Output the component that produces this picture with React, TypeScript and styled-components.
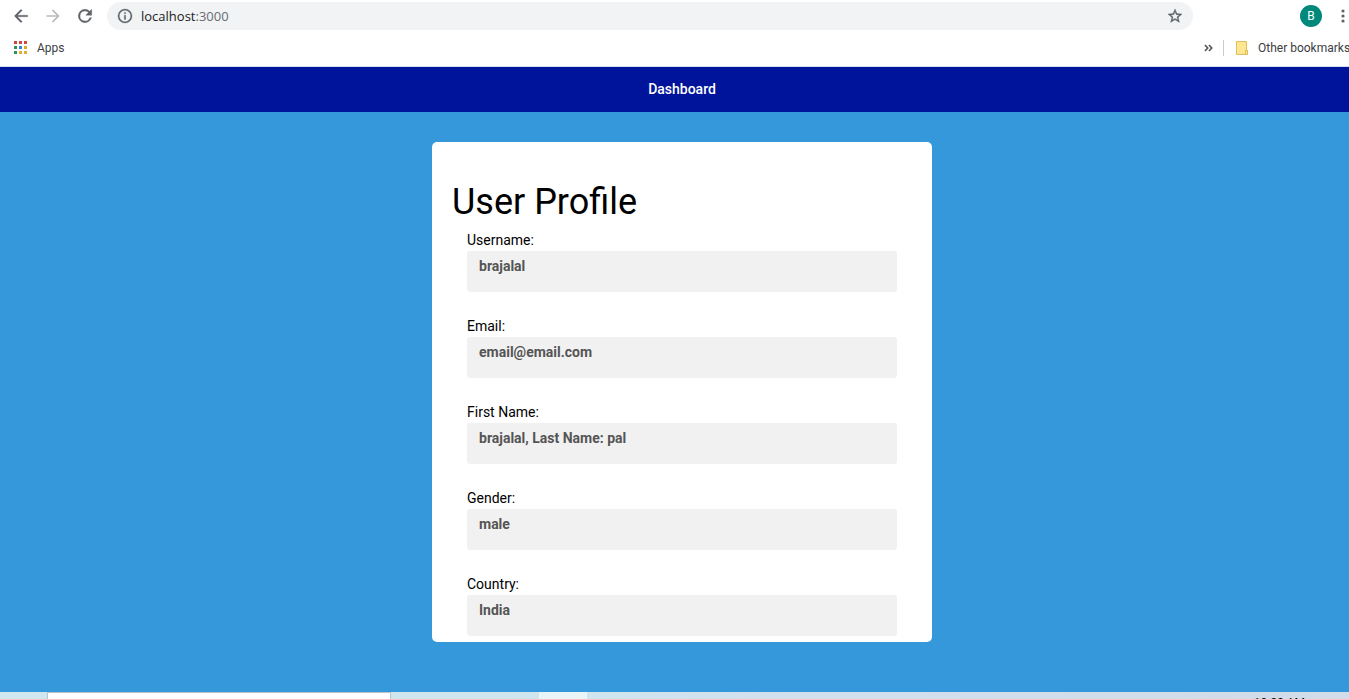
import React from "react";
import styled, { createGlobalStyle } from "styled-components";

const GlobalStyle = createGlobalStyle`
  * { box-sizing: border-box; }
  html, body { margin: 0; padding: 0; }
  body { overflow: hidden; font-family: Roboto, "Liberation Sans", sans-serif; font-size: 14px; }
`;

const uiFont = `"Open Sans", "Noto Sans", sans-serif`;

const Screen = styled.div`
  display: flex;
  flex-direction: column;
  height: 100vh;
  overflow: hidden;
`;

const BrowserChrome = styled.div`
  flex: none;
  background: #fff;
  border-bottom: 1px solid #d5dff0;
  font-family: ${uiFont};
`;

const Toolbar = styled.div`
  display: flex;
  align-items: center;
  height: 32px;
  padding-left: 9px;
`;

const IconButton = styled.button<{ $muted?: boolean }>`
  display: flex;
  flex: none;
  align-items: center;
  justify-content: center;
  width: 24px;
  height: 24px;
  padding: 0;
  border: 0;
  background: none;
  color: ${(p) => (p.$muted ? "#babcbe" : "#5f6368")};
`;

const NavButtons = styled.div`
  display: flex;
  gap: 8px;
  margin-right: 10px;
`;

const AddressBar = styled.div`
  display: flex;
  flex: 1;
  align-items: center;
  height: 28px;
  padding: 0 6px;
  border-radius: 14px;
  background: #f1f3f4;
`;

const Address = styled.a`
  flex: 1;
  margin-left: 4px;
  color: #202124;
  font-size: 13px;
  line-height: 20px;
  text-decoration: none;
`;

const Port = styled.span`
  color: #686c70;
`;

const Avatar = styled.button`
  flex: none;
  width: 22px;
  height: 22px;
  margin-left: 107px;
  margin-right: 9px;
  padding: 0;
  border: 0;
  border-radius: 50%;
  background: #00897b;
  color: #fff;
  font-family: Roboto, sans-serif;
  font-size: 12px;
  line-height: 22px;
`;

const MenuSlot = styled.div`
  flex: none;
  width: 18px;
  overflow: hidden;
`;

const BookmarksBar = styled.div`
  display: flex;
  align-items: center;
  height: 34px;
  padding: 0 0 2px 14px;
`;

const Bookmark = styled.a`
  display: flex;
  flex: none;
  align-items: center;
  gap: 10px;
  color: #3c4043;
  font-family: Roboto, ${uiFont};
  font-size: 12px;
  line-height: 20px;
  text-decoration: none;
  white-space: nowrap;
`;

const OtherBookmarks = styled.div`
  display: flex;
  align-items: center;
  width: 153px;
  margin-left: auto;
`;

const Divider = styled.div`
  flex: none;
  width: 1px;
  height: 16px;
  margin: 0 12px 0 3px;
  background: #c8cacd;
`;

const PageHeader = styled.header`
  flex: none;
  padding: 12px 0 13px 15px;
  background: #00149b;
  text-align: center;
`;

const HeaderLink = styled.a`
  color: #fff;
  font-weight: 500;
  line-height: 20px;
  text-decoration: none;
`;

const Main = styled.main`
  display: flex;
  flex: 1;
  align-items: flex-start;
  justify-content: center;
  padding: 30px 0 50px 15px;
  background: #3498db;
`;

const Card = styled.section`
  width: 500px;
  max-width: 100%;
  padding: 40px 20px 6px;
  border-radius: 5px;
  background: #fff;
`;

const Title = styled.h1`
  margin: 0 0 8px;
  font-size: 36px;
  font-weight: 400;
  line-height: 40px;
`;

const Fields = styled.dl`
  display: grid;
  gap: 24px;
  margin: 0;
  padding: 0 15px;
`;

const Label = styled.dt`
  line-height: 21px;
`;

const Value = styled.dd`
  height: 41px;
  margin: 0;
  padding: 5px 12px;
  border-radius: 3px;
  background: #f1f1f1;
  color: #555;
  font-weight: 700;
  line-height: 20px;
`;

const Taskbar = styled.footer`
  display: flex;
  flex: none;
  height: 7px;
  overflow: hidden;
  background: linear-gradient(90deg, #d0e7ef 0%, #d0e6ef 42%, #d2dfec 60%, #d3dce9 100%);
`;

const TaskSearch = styled.div`
  width: 344px;
  margin-left: 47px;
  border: 1px solid #b5c5cc;
  border-bottom: 0;
  background: #fff;
`;

const ActiveTask = styled.div`
  width: 48px;
  margin-left: 148px;
  background: #eaf5f8;
`;

const Clock = styled.time`
  margin: 3px 44px 0 auto;
  color: #000;
  font-size: 12px;
  line-height: 16px;
  white-space: nowrap;
`;

const fields = [
  { label: "Username:", value: "brajalal" },
  { label: "Email:", value: "email@email.com" },
  { label: "First Name:", value: "brajalal, Last Name: pal" },
  { label: "Gender:", value: "male" },
  { label: "Country:", value: "India" },
];

const appColors = [
  "#d2453d", "#d2453d", "#d2453d",
  "#2f9255", "#3b82d0", "#d9a62e",
  "#2f9255", "#dfae32", "#dfae32",
];

const BackIcon = () => (
  <svg width="20" height="20" viewBox="0 0 24 24" fill="currentColor" stroke="currentColor" strokeWidth="0.3">
    <path d="M20 11H7.83l5.59-5.59L12 4l-8 8 8 8 1.41-1.41L7.83 13H20v-2z" />
  </svg>
);

const ForwardIcon = () => (
  <svg width="20" height="20" viewBox="0 0 24 24" fill="currentColor">
    <path d="M12 4l-1.41 1.41L16.17 11H4v2h12.17l-5.58 5.59L12 20l8-8z" />
  </svg>
);

const ReloadIcon = () => (
  <svg width="20" height="20" viewBox="0 0 24 24" fill="currentColor" stroke="currentColor" strokeWidth="0.5">
    <path d="M17.65 6.35A7.96 7.96 0 0 0 12 4a8 8 0 1 0 7.73 10h-2.08A6 6 0 1 1 12 6c1.66 0 3.14.69 4.22 1.78L13 11h7V4l-2.35 2.35z" />
  </svg>
);

const InfoIcon = () => (
  <svg width="18" height="18" viewBox="-0.7 -0.7 25.4 25.4" fill="currentColor">
    <path d="M11 7h2v2h-2zm0 4h2v6h-2zm1-9a10 10 0 1 0 0 20 10 10 0 0 0 0-20zm0 18a8 8 0 1 1 0-16 8 8 0 0 1 0 16z" stroke="currentColor" strokeWidth="0.4" />
  </svg>
);

const StarIcon = () => (
  <svg width="18" height="18" viewBox="-0.7 -0.7 25.4 25.4" fill="currentColor">
    <path d="M22 9.24l-7.19-.62L12 2 9.19 8.63 2 9.24l5.46 4.73L5.82 21 12 17.27 18.18 21l-1.63-7.03L22 9.24zM12 15.4l-3.76 2.27 1-4.28-3.32-2.88 4.38-.38L12 6.1l1.71 4.04 4.38.38-3.32 2.88 1 4.28L12 15.4z" stroke="currentColor" strokeWidth="0.5" />
  </svg>
);

const DotsIcon = () => (
  <svg width="4" height="14" viewBox="0 0 4 14" fill="currentColor">
    <circle cx="2" cy="2" r="1.6" />
    <circle cx="2" cy="7" r="1.6" />
    <circle cx="2" cy="12" r="1.6" />
  </svg>
);

const AppsIcon = () => (
  <svg width="13" height="14" viewBox="0 0 13 14">
    {appColors.map((color, i) => (
      <rect key={i} x={(i % 3) * 5} y={Math.floor(i / 3) * 5} width="3" height="3" fill={color} />
    ))}
  </svg>
);

const ChevronsIcon = () => (
  <svg width="10" height="8" viewBox="0 0 10 8" fill="none" stroke="#55595e" strokeWidth="1.7">
    <path d="M2 1 4.7 4 2 7M6 1 8.7 4 6 7" />
  </svg>
);

const FolderIcon = () => (
  <svg width="12" height="14" viewBox="0 0 12 14" fill="#ffe690" stroke="#dfbd5d">
    <path d="M.5.5h10v9h1v4H.5z" />
    <path d="M9.5 13.5v-4h2v4z" />
  </svg>
);

export default function App() {
  return (
    <Screen>
      <GlobalStyle />
      <BrowserChrome>
        <Toolbar>
          <NavButtons>
            <IconButton aria-label="Back"><BackIcon /></IconButton>
            <IconButton aria-label="Forward" $muted><ForwardIcon /></IconButton>
            <IconButton aria-label="Reload"><ReloadIcon /></IconButton>
          </NavButtons>
          <AddressBar>
            <IconButton aria-label="Site information"><InfoIcon /></IconButton>
            <Address href="#">localhost<Port>:3000</Port></Address>
            <IconButton aria-label="Bookmark this page"><StarIcon /></IconButton>
          </AddressBar>
          <Avatar aria-label="Account B">B</Avatar>
          <MenuSlot>
            <IconButton aria-label="Browser menu"><DotsIcon /></IconButton>
          </MenuSlot>
        </Toolbar>
        <BookmarksBar>
          <Bookmark href="#"><AppsIcon />Apps</Bookmark>
          <OtherBookmarks>
            <IconButton aria-label="More bookmarks"><ChevronsIcon /></IconButton>
            <Divider />
            <Bookmark href="#"><FolderIcon />Other bookmarks</Bookmark>
          </OtherBookmarks>
        </BookmarksBar>
      </BrowserChrome>
      <PageHeader>
        <HeaderLink href="#">Dashboard</HeaderLink>
      </PageHeader>
      <Main>
        <Card>
          <Title>User Profile</Title>
          <Fields>
            {fields.map((field) => (
              <div key={field.label}>
                <Label>{field.label}</Label>
                <Value>{field.value}</Value>
              </div>
            ))}
          </Fields>
        </Card>
      </Main>
      <Taskbar>
        <TaskSearch />
        <ActiveTask />
        <Clock>10:22 AM</Clock>
      </Taskbar>
    </Screen>
  );
}
